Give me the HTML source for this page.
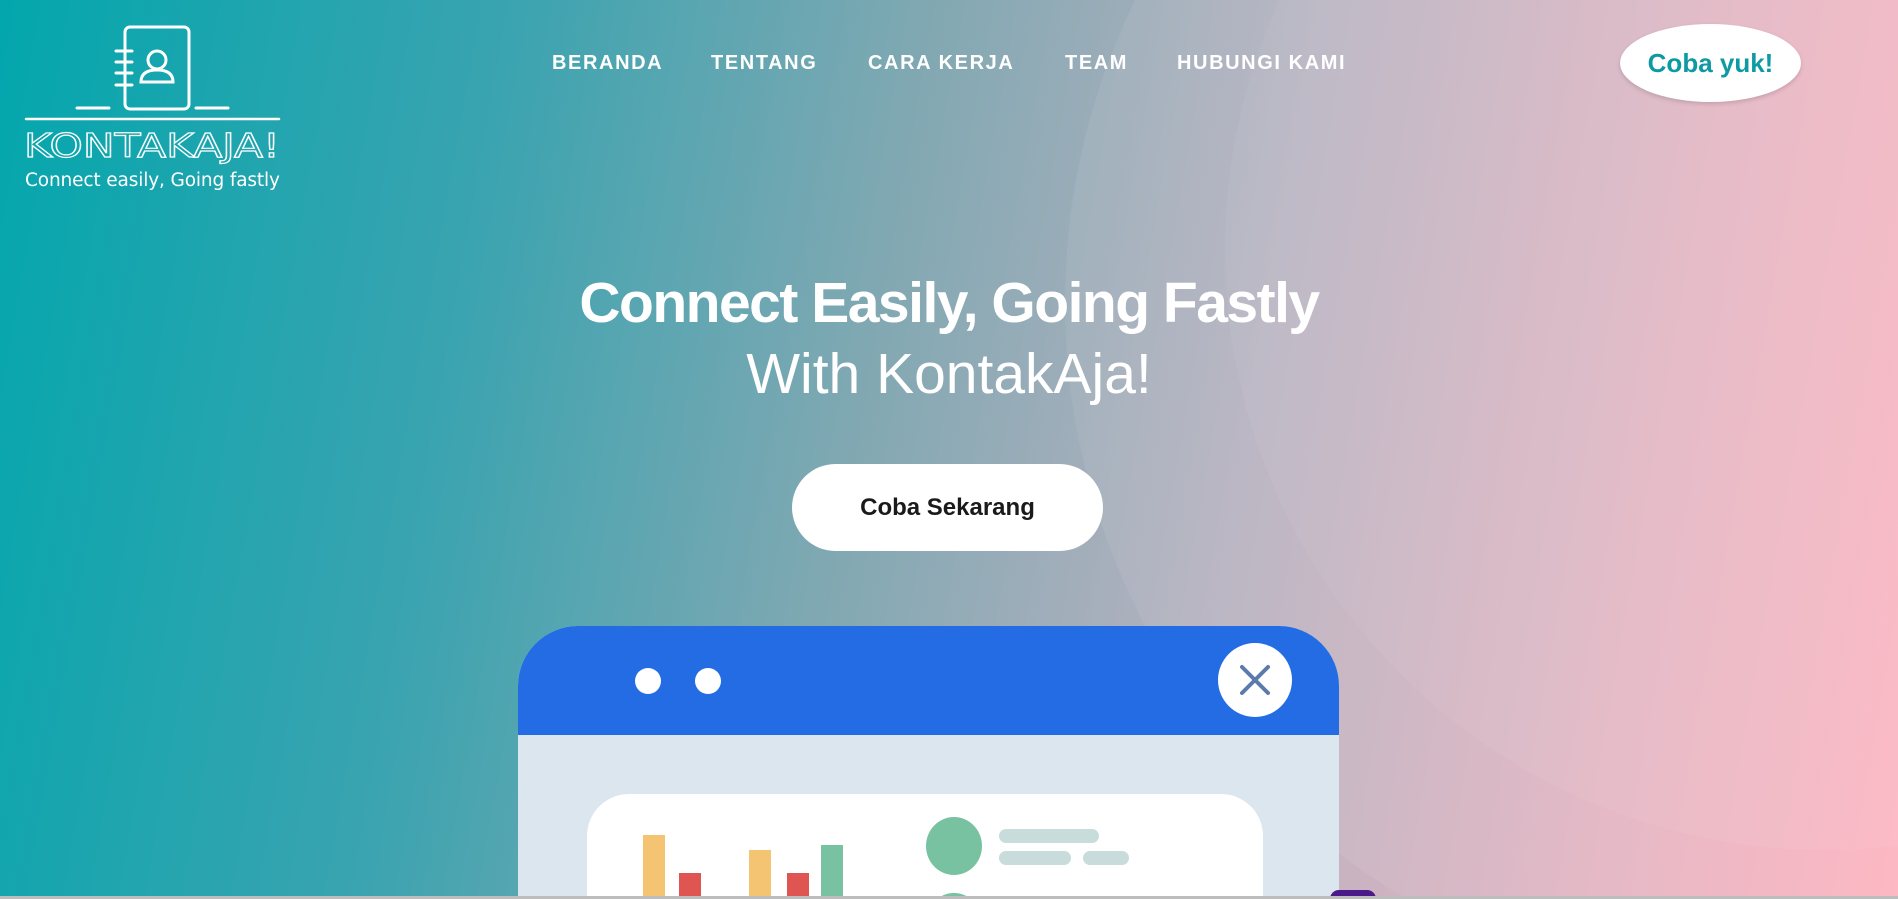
<!DOCTYPE html>
<html style="width:1898px;height:899px;overflow:hidden"><head><meta charset="utf-8"><style>
*{margin:0;padding:0;box-sizing:border-box}
body{width:1898px;height:899px;overflow:hidden;position:relative;font-family:"Liberation Sans",sans-serif}
#w{position:absolute;left:0;top:0;width:1898px;height:899px;overflow:hidden;
background:linear-gradient(100deg,#03a6ad 0%,#3aa4b0 25%,#80a8b2 45%,#b8b2c0 65%,#e3b4c2 85%,#fdb3bf 100%);}
.c{position:absolute;border-radius:50%;background:rgba(255,255,255,0.07)}
.nav a{position:absolute;top:52px;color:#fff;font-weight:bold;font-size:20px;letter-spacing:1.6px;text-decoration:none;white-space:nowrap}
</style></head><body><div id="w">
<div class="c" style="left:1065px;top:-387px;width:1380px;height:1380px"></div>
<div class="c" style="left:1225px;top:-350px;width:1200px;height:1200px;background:rgba(255,255,255,0.05)"></div>

<svg style="position:absolute;left:0;top:0" width="300" height="190">
<g stroke="#fff" stroke-width="3" fill="none" stroke-linecap="round">
<rect x="125" y="27" width="64" height="82" rx="5"/>
<line x1="116" y1="51" x2="132" y2="51"/><line x1="116" y1="62" x2="132" y2="62"/><line x1="116" y1="73" x2="132" y2="73"/><line x1="116" y1="85" x2="132" y2="85"/>
<circle cx="157" cy="60" r="9"/><path d="M141 82 Q141 70 157 70 Q173 70 173 82 Z"/>
<line x1="77" y1="108" x2="109" y2="108"/><line x1="196" y1="108" x2="228" y2="108"/>
<line x1="26" y1="119" x2="279" y2="119" stroke-width="2.5"/>
</g>
<text x="24" y="157" font-family="DejaVu Sans,sans-serif" font-size="33" fill="none" stroke="#fff" stroke-width="1.2" textLength="256" lengthAdjust="spacingAndGlyphs">KONTAKAJA!</text>
<text x="25" y="186" font-family="DejaVu Sans,sans-serif" font-size="18.5" fill="#fff" textLength="255">Connect easily, Going fastly</text>
</svg>

<div class="nav">
<a style="left:552px">BERANDA</a><a style="left:711px">TENTANG</a><a style="left:868px">CARA KERJA</a><a style="left:1065px">TEAM</a><a style="left:1177px">HUBUNGI KAMI</a>
</div>
<div style="position:absolute;left:1620px;top:24px;width:181px;height:78px;border-radius:50%;background:#fff;box-shadow:0 2px 4px rgba(0,0,0,.15);color:#0d9aa3;font-weight:bold;font-size:26px;display:flex;align-items:center;justify-content:center">Coba yuk!</div>

<div style="position:absolute;left:0;width:1898px;top:270px;text-align:center;color:#fff;font-size:57px;font-weight:bold;letter-spacing:-1.5px">Connect Easily, Going Fastly</div>
<div style="position:absolute;left:0;width:1898px;top:341px;text-align:center;color:#fff;font-size:57px">With KontakAja!</div>

<div style="position:absolute;left:792px;top:464px;width:311px;height:87px;border-radius:44px;background:#fff;color:#1a1a1a;font-weight:bold;font-size:24px;display:flex;align-items:center;justify-content:center">Coba Sekarang</div>

<div style="position:absolute;left:518px;top:626px;width:821px;height:273px;border-radius:60px 60px 0 0;background:#dce6ee;overflow:hidden">
<div style="height:109px;background:#246ce3"></div>
<div style="position:absolute;left:117px;top:42px;width:26px;height:26px;border-radius:50%;background:#fff"></div>
<div style="position:absolute;left:177px;top:42px;width:26px;height:26px;border-radius:50%;background:#fff"></div>
<div style="position:absolute;left:700px;top:17px;width:74px;height:74px;border-radius:50%;background:#fff"></div>
<svg style="position:absolute;left:700px;top:17px" width="74" height="74"><g stroke="#5b7bac" stroke-width="4" stroke-linecap="round"><line x1="24" y1="24" x2="50" y2="50"/><line x1="50" y1="24" x2="24" y2="50"/></g></svg>
<div style="position:absolute;left:69px;top:168px;width:676px;height:200px;border-radius:42px;background:#fff"></div>
<div style="position:absolute;left:125px;top:209px;width:22px;height:100px;background:#f4c472"></div>
<div style="position:absolute;left:161px;top:247px;width:22px;height:100px;background:#de5552"></div>
<div style="position:absolute;left:231px;top:224px;width:22px;height:100px;background:#f4c472"></div>
<div style="position:absolute;left:269px;top:247px;width:22px;height:100px;background:#de5552"></div>
<div style="position:absolute;left:303px;top:219px;width:22px;height:100px;background:#78c2a2"></div>
<div style="position:absolute;left:408px;top:191px;width:56px;height:58px;border-radius:50%;background:#78c2a2"></div>
<div style="position:absolute;left:408px;top:267px;width:56px;height:58px;border-radius:50%;background:#78c2a2"></div>
<div style="position:absolute;left:481px;top:203px;width:100px;height:14px;border-radius:7px;background:#c8dcdc"></div>
<div style="position:absolute;left:481px;top:225px;width:72px;height:14px;border-radius:7px;background:#c8dcdc"></div>
<div style="position:absolute;left:565px;top:225px;width:46px;height:14px;border-radius:7px;background:#c8dcdc"></div>
</div>
<div style="position:absolute;left:1330px;top:890px;width:46px;height:9px;border-radius:20px 20px 0 0;background:#4a1a8a"></div>
<div style="position:absolute;left:0;top:896px;width:1898px;height:3px;background:#bdbdbd"></div>
</div></body></html>
